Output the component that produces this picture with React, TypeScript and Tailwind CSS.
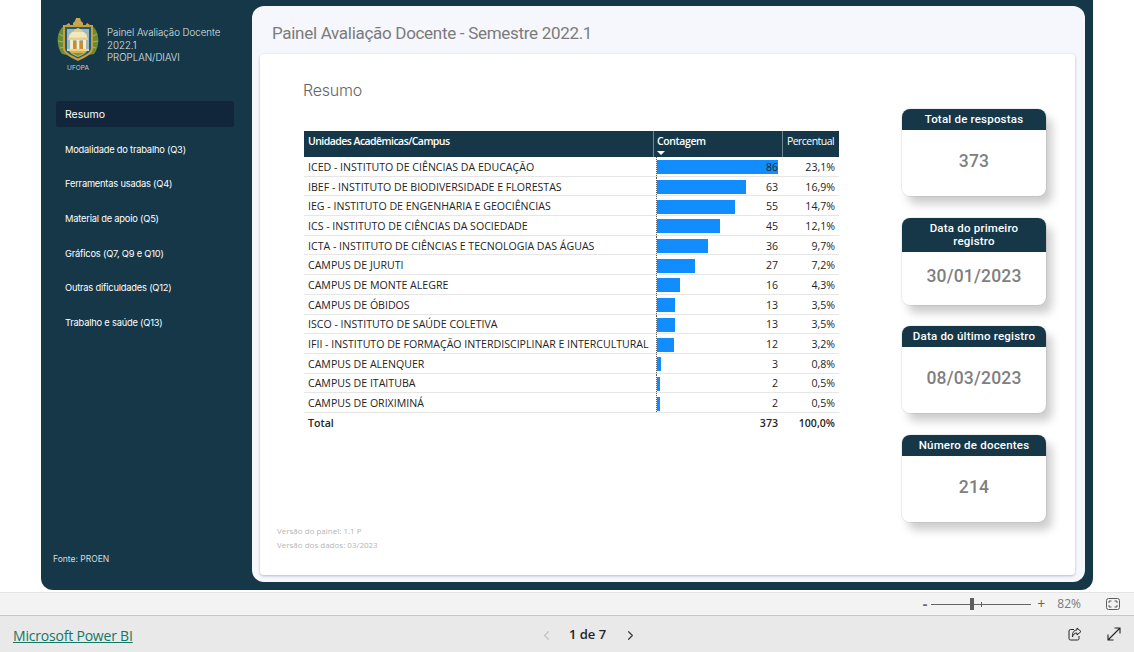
import { ChevronLeft, ChevronRight } from "lucide-react";

const navItems = [
  "Modalidade do trabalho (Q3)",
  "Ferramentas usadas (Q4)",
  "Material de apoio (Q5)",
  "Gráficos (Q7, Q9 e Q10)",
  "Outras dificuldades (Q12)",
  "Trabalho e saúde (Q13)",
];

const rows = [
  { name: "ICED - INSTITUTO DE CIÊNCIAS DA EDUCAÇÃO", count: 86, pct: "23,1%" },
  { name: "IBEF - INSTITUTO DE BIODIVERSIDADE E FLORESTAS", count: 63, pct: "16,9%" },
  { name: "IEG - INSTITUTO DE ENGENHARIA E GEOCIÊNCIAS", count: 55, pct: "14,7%" },
  { name: "ICS - INSTITUTO DE CIÊNCIAS DA SOCIEDADE", count: 45, pct: "12,1%" },
  { name: "ICTA - INSTITUTO DE CIÊNCIAS E TECNOLOGIA DAS ÁGUAS", count: 36, pct: "9,7%" },
  { name: "CAMPUS DE JURUTI", count: 27, pct: "7,2%" },
  { name: "CAMPUS DE MONTE ALEGRE", count: 16, pct: "4,3%" },
  { name: "CAMPUS DE ÓBIDOS", count: 13, pct: "3,5%" },
  { name: "ISCO - INSTITUTO DE SAÚDE COLETIVA", count: 13, pct: "3,5%" },
  { name: "IFII - INSTITUTO DE FORMAÇÃO INTERDISCIPLINAR E INTERCULTURAL", count: 12, pct: "3,2%" },
  { name: "CAMPUS DE ALENQUER", count: 3, pct: "0,8%" },
  { name: "CAMPUS DE ITAITUBA", count: 2, pct: "0,5%" },
  { name: "CAMPUS DE ORIXIMINÁ", count: 2, pct: "0,5%" },
];

function Logo() {
  return (
    <svg width="44" height="47" viewBox="0 0 44 47" className="shrink-0">
      {/* laurel on both sides */}
      <path d="M8 10C1 14-1 29 6 38l5 1C6 30 6 20 10 12z" fill="#6d8a35" />
      <path d="M36 10c7 4 9 19 2 28l-5 1c5-9 5-19 1-27z" fill="#6d8a35" />
      <path d="M3 18l4 2M2 25l5 1M4 32l4-1M41 18l-4 2M42 25l-5 1M40 32l-4-1" stroke="#a3b85a" strokeWidth="1" />
      {/* crown */}
      <path d="M17 7l2-2 1-3h4l1 3 2 2v3H17z" fill="#c9a650" />
      <path d="M10 9l3-2 2 3M34 9l-3-2-2 3" fill="#c9a650" />
      {/* shield */}
      <path d="M7 9h30v23c0 6-7 9-15 13C14 41 7 38 7 32z" fill="#c9a035" />
      <path d="M9 11h26v21c0 5-6 7-13 10.500C15 39 9 37 9 32z" fill="#1e5c80" />
      <path d="M11 13h22v20H11z" fill="#9fb7b8" />
      {/* building */}
      <path d="M13 20c2-7 16-7 18 0v2H13z" fill="#f2e7bd" />
      <path d="M18 14l4-2 4 2v2h-8z" fill="#e3cf8d" />
      <path d="M12 21.500h20v2.500H12z" fill="#e6d08a" />
      <path d="M14 24h3v9h-3zM20.500 24h3v9h-3zM27 24h3v9h-3z" fill="#f5edcf" />
      <path d="M17 25h3.500v8H17zM23.500 25H27v8h-3.500z" fill="#c98f2c" />
      <path d="M11 33h22v2H11z" fill="#e8d596" />
      <path d="M13 35h18c-2 3-5 4-9 6-4-2-7-3-9-6z" fill="#d9b53f" />
      <path d="M16 37h12c-2 1-4 2-6 3-2-1-4-2-6-3z" fill="#6f9a55" />
    </svg>
  );
}

function Card({ title, value }: { title: string; value: string }) {
  return (
    <div className="w-[144px] h-[87px] flex flex-col rounded-[8px] bg-white shadow-[6px_8px_10px_rgba(0,0,0,0.2),0_0_0_1px_rgba(0,0,0,0.06)] overflow-hidden font-['Roboto',sans-serif]">
      <div className="bg-[#153748] text-white text-[11.500px] leading-[13px] font-medium tracking-[0.2px] text-center px-[6px] py-[4px]">
        {title}
      </div>
      <div className="flex-1 flex items-center justify-center pb-[3px] text-[#7f7f7f] font-medium tracking-[0.2px] text-[17.500px]">
        {value}
      </div>
    </div>
  );
}

export default function App() {
  return (
    <div className="w-[1134px] h-[652px] overflow-hidden bg-white flex flex-col font-['Open_Sans',sans-serif]">
      <div className="h-[590px] pl-[41px] pr-[41px] shrink-0">
        <div className="h-full bg-[#153748] rounded-b-[12px] flex">
          <aside className="w-[211px] shrink-0 flex flex-col pl-[15px] font-['Inter',sans-serif]">
            <div className="flex items-start gap-[7px] pt-[16px] h-[101px]">
              <div className="flex flex-col items-center w-[44px]">
                <Logo />
                <span className="text-[6.500px] leading-[9px] text-[#c9d2d8] mt-[1px]">UFOPA</span>
              </div>
              <div className="text-[9.700px] leading-[12.500px] text-[#dfe5e8] pt-[11px] whitespace-nowrap font-light">
                <p>Painel Avaliação Docente</p>
                <p>2022.1</p>
                <p>PROPLAN/DIAVI</p>
              </div>
            </div>
            <div className="w-[178px] h-[26px] pt-[1px] rounded-[3px] bg-[#11253b] text-white text-[10.500px] flex items-center pl-[9px]">
              Resumo
            </div>
            <nav className="flex flex-col pt-[5.500px]">
              {navItems.map((item) => (
                <div key={item} className="h-[34.600px] pl-[9px] flex items-center text-white text-[9.300px] tracking-[-0.2px] whitespace-nowrap">
                  {item}
                </div>
              ))}
            </nav>
            <div className="mt-auto mb-[24px] -ml-[3px] text-[8.500px] text-[#d5dce0]">Fonte: PROEN</div>
          </aside>
          <main className="w-[833px] h-[576px] mt-[6px] rounded-[12px] bg-[#f5f7fc] flex flex-col pl-[8px] pr-[10px]">
            <h1 className="h-[48px] shrink-0 pl-[12px] pt-[14px] text-[17px] leading-[26px] text-[#7b7b7b] font-['Roboto',sans-serif] tracking-[-0.3px]">
              Painel Avaliação Docente - Semestre 2022.1
            </h1>
            <div className="h-[521px] rounded-[4px] bg-white shadow-[0_1px_3px_rgba(0,0,0,0.25)] flex">
              <div className="w-[642px] pl-[43px] flex flex-col">
                <h2 className="pt-[25px] h-[77px] text-[16px] leading-[22px] text-[#666666] font-['Inter',sans-serif] font-light tracking-[-0.2px]">
                  Resumo
                </h2>
                <div className="w-[535px] ml-[1px] text-[10.600px] text-[#252423]">
                  <div className="h-[26px] flex bg-[#153748] text-white text-[10.500px] font-semibold tracking-[-0.55px]">
                    <div className="w-[349px] pl-[4px] pt-[3px]">Unidades Acadêmicas/Campus</div>
                    <div className="w-[129px] border-l border-[#6f8794] pl-[3px] pt-[3px] relative tracking-[-0.4px]">
                      Contagem
                      <span className="absolute left-[3px] bottom-[2px] w-0 h-0 border-x-[4px] border-x-transparent border-t-[4px] border-t-white" />
                    </div>
                    <div className="flex-1 border-l border-[#6f8794] pl-[4px] pt-[3px] font-normal tracking-[-0.55px]">Percentual</div>
                  </div>
                  {rows.map((r) => (
                    <div key={r.name} className="h-[19.700px] flex items-center border-b border-[#e6e6e6] last:border-[#252423]">
                      <div className="w-[349px] pl-[4px] pt-[3px] whitespace-nowrap">{r.name}</div>
                      <div className="w-[129px] h-full pl-[4px] relative flex items-center">
                        <span className="absolute left-[3px] inset-y-0 border-l border-dotted border-[#555555]" />
                        <div className="h-[14px] mt-[2px] bg-[#118dff]" style={{ width: r.count * 1.41 }} />
                        <span className="absolute right-[4px] pt-[3px]">{r.count}</span>
                      </div>
                      <div className="flex-1 text-right pr-[4px] pt-[3px]">{r.pct}</div>
                    </div>
                  ))}
                  <div className="h-[20px] pt-[3px] flex items-center font-semibold">
                    <div className="w-[349px] pl-[4px]">Total</div>
                    <div className="w-[129px] text-right pr-[4px]">373</div>
                    <div className="flex-1 text-right pr-[4px]">100,0%</div>
                  </div>
                </div>
                <div className="mt-[91px] -ml-[26px] text-[8px] leading-[14.500px] text-[#b5b5b5]">
                  <p>Versão do painel: 1.1 P</p>
                  <p>Versão dos dados: 03/2023</p>
                </div>
              </div>
              <div className="flex flex-col gap-[21.500px] pt-[55px]">
                <Card title="Total de respostas" value="373" />
                <Card title="Data do primeiro registro" value="30/01/2023" />
                <Card title="Data do último registro" value="08/03/2023" />
                <Card title="Número de docentes" value="214" />
              </div>
            </div>
          </main>
        </div>
      </div>
      <div className="h-[24px] mt-[2px] bg-[#f3f3f3] border-t border-[#e4e4e4] border-b border-b-[#c8c8c8] flex items-center justify-end text-[#666666] shrink-0">
        <span className="text-[14px] leading-none font-bold mr-[4px]">-</span>
        <div className="w-[100px] h-px bg-[#666666] relative mr-[6px]">
          <span className="absolute left-[39px] -top-[6px] w-[4px] h-[12px] bg-[#605e5c]" />
          <span className="absolute left-[50px] -top-[2px] w-px h-[5px] bg-[#605e5c]" />
        </div>
        <span className="text-[14px] leading-none mr-[12px]">+</span>
        <span className="text-[12px] text-[#7a7a7a] mr-[25px]">82%</span>
        <svg width="14" height="12" viewBox="0 0 14 12" fill="none" stroke="#605e5c" className="mr-[14px]">
          <rect x="0.500" y="0.500" width="13" height="11" rx="2" />
          <path d="M3 5V3h2.500M8.500 3H11v2M11 7v2H8.500M5.500 9H3V7" />
        </svg>
      </div>
      <div className="flex-1 bg-[#e9e9e9] relative flex items-center justify-center">
        <a className="absolute left-[13px] top-[10px] text-[14px] leading-[20px] text-[#117865] underline font-medium tracking-[-0.2px]">
          Microsoft Power BI
        </a>
        <div className="flex items-center ml-[43px] pt-[2px]">
          <ChevronLeft size={15} className="text-[#c4c4c4]" />
          <span className="ml-[15px] mr-[17px] text-[13px] font-semibold text-[#252423]">1 de 7</span>
          <ChevronRight size={15} className="text-[#404040]" />
        </div>
        <div className="absolute right-[13px] top-[11px] flex gap-[25px]">
          <svg width="14" height="14" viewBox="0 0 14 14" fill="none" stroke="#252423" strokeWidth="1">
            <path d="M6 2.500H2.500a1.500 1.500 0 0 0-1.500 1.500v7.500a1.500 1.500 0 0 0 1.500 1.500h7a1.500 1.500 0 0 0 1.500-1.500V9" />
            <path d="M9 1l4 3.500L9 8V6C6.500 6 5 7.500 4.500 10 4 6.500 5.500 3 9 3z" />
          </svg>
          <svg width="14" height="14" viewBox="0 0 14 14" fill="none" stroke="#252423" strokeWidth="1.100">
            <path d="M1 13L13 1M7.500 1H13v5.500M1 7.500V13h5.500" />
          </svg>
        </div>
      </div>
    </div>
  );
}
